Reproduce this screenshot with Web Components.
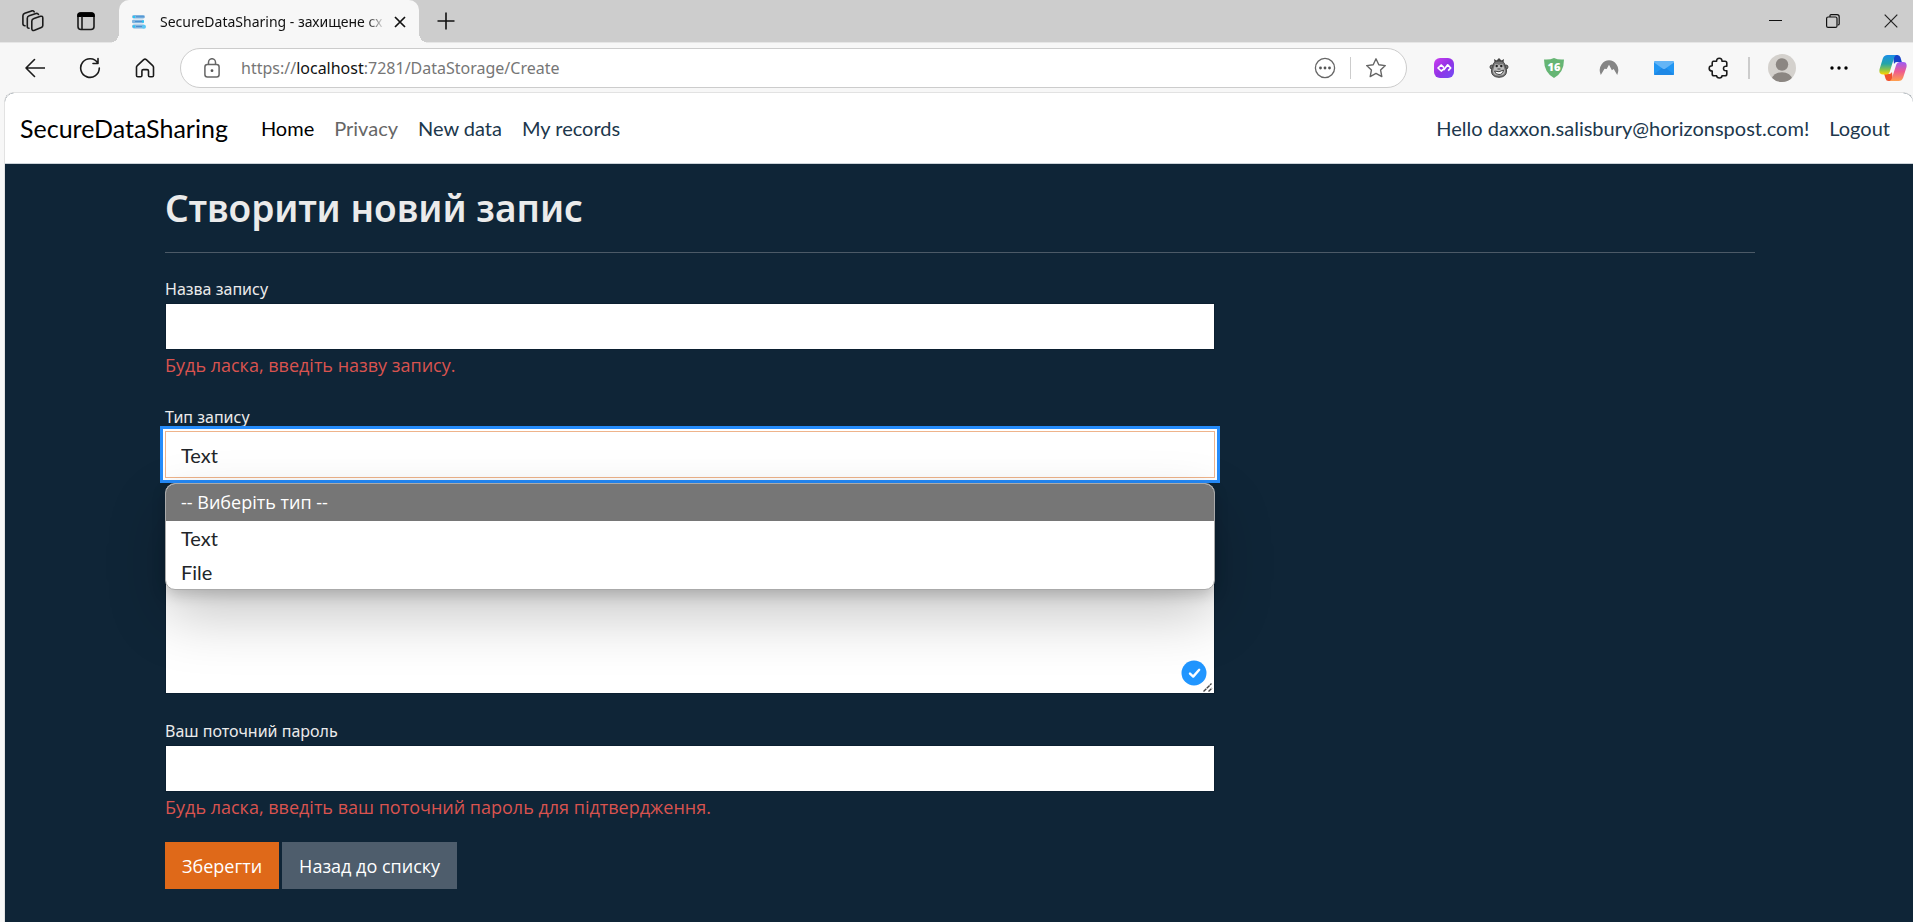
<!DOCTYPE html>
<html lang="uk">
<head>
<meta charset="utf-8">
<title>SecureDataSharing - захищене сховище</title>
<style>
html,body{margin:0;height:100%}
body{font-family:"Lato","Noto Sans",sans-serif;background:#f7f7f7;display:flex;flex-direction:column;min-height:100vh}
</style>
</head>
<body>
<browser-tabs></browser-tabs>
<browser-toolbar></browser-toolbar>
<site-page>
  <site-nav slot="nav"></site-nav>
  <record-form></record-form>
</site-page>
<script>
const define=(name,html,setup)=>customElements.define(name,class extends HTMLElement{
  connectedCallback(){
    if(this.shadowRoot)return;
    const t=document.createElement('template');
    t.innerHTML=typeof html==='function'?html(this):html;
    this.attachShadow({mode:'open'}).append(t.content.cloneNode(true));
    if(setup)setup(this.shadowRoot,this);
  }
});

/* name: [width, height, markup] */
const line='fill="none" stroke="#1b1b1b" stroke-width="1.6" stroke-linecap="round" stroke-linejoin="round"';
const icons={
 workspaces:[22,22,`<g ${line} stroke-width="1.4"><path d="M12 8.500 18.500 6.300Q20.800 5.800 20.800 8v7.500q0 1.500-1.500 2.100L12.500 20.300Q9.800 21 9.800 18.800V11Q9.800 9.200 12 8.500z"/><path d="M7 18.300Q5.200 18.300 5.300 16.300V8.200Q5.300 6.400 7.200 5.800L14 3.500Q15.800 3.100 16.500 4.500"/><path d="M3 15.800Q.8 15.500.9 13.500V5.800Q.9 4 2.800 3.300L9.600.9Q11.400.5 12.200 1.900"/></g>`],
 tabs:[20,20,`<rect x="2" y="2" width="16" height="16.500" rx="3" ${line}/><path d="M1.200 6V4.500Q1.200 1.200 4.500 1.200h11q3.300 0 3.300 3.300V6z" fill="#000"/><path d="M6 6v12" ${line} stroke-width="1.300"/>`],
 favicon:[16,16,`<g fill="#7fb4e0"><rect x="1" y="1" width="13" height="3.600" rx="1.800"/><rect x="1" y="5.700" width="12" height="3.600" rx="1.200"/><rect x="1" y="10.400" width="13" height="4" rx="1.800"/></g><g fill="#4a8fd0"><path d="M5 2.300h8v1H5zM4 7h8v1H4zM5 12h6v1H5z"/></g><circle cx="13" cy="12.800" r="2" fill="#5cc8f5"/><path d="M2 2h2v2H2zM2 11.500h2v2H2zM11 6.500h2v2h-2z" fill="#25c8f4"/>`],
 close:[14,14,`<path d="m2 2 10 10M12 2 2 12" stroke="#111" stroke-width="1.700"/>`],
 plus:[18,18,`<path d="M9 .5v17M.5 9h17" stroke="#111" stroke-width="1.600"/>`],
 min:[14,14,`<path d="M1 6.500h13" stroke="#111" stroke-width="1"/>`],
 restore:[14,14,`<path d="M4 3V1.500Q4 .7 5 .7h6q2.200 0 2.200 2.200v7.100q0 1-1.500 1" fill="none" stroke="#111" stroke-width="1.200"/><rect x=".6" y="3" width="10.400" height="10.400" rx="1.500" fill="none" stroke="#111" stroke-width="1.200"/>`],
 winclose:[14,14,`<path d="m.7.7 12.600 12.600M13.300.7.7 13.300" stroke="#222" stroke-width="1.200"/>`],
 back:[20,20,`<path d="M19.500 10H1M9.500 1.500 1 10l8.500 8.500" ${line}/>`],
 reload:[22,22,`<path d="M18.800 6A9.300 9.300 0 1 0 20.300 11M19 1.500v5h-5" ${line}/>`],
 home:[20,20,`<path d="M1.500 9.300Q1.500 8.300 2.300 7.600L8.700 1.700Q10 .6 11.300 1.700l6.400 5.900q.8.700.8 1.700v8.200q0 1.300-1.300 1.300h-2.400q-1.300 0-1.300-1.300V13q0-1.400-1.400-1.400H8.300Q6.900 11.600 6.900 13v4.500q0 1.300-1.300 1.300H2.800q-1.300 0-1.300-1.300z" ${line}/>`],
 lock:[16,20,`<g fill="none" stroke="#666" stroke-width="1.500"><rect x=".9" y="6.500" width="14.200" height="12.500" rx="2.500"/><path d="M4.500 6.500V4.200a3.500 3.500 0 0 1 7 0v2.300"/></g><circle cx="8" cy="12.700" r="1.400" fill="#555"/>`],
 info:[22,22,`<circle cx="11" cy="11" r="9.600" fill="none" stroke="#666" stroke-width="1.300"/><g fill="#555"><circle cx="6.500" cy="11" r="1.400"/><circle cx="11" cy="11" r="1.400"/><circle cx="15.500" cy="11" r="1.400"/></g>`],
 star:[22,22,`<path d="m11 1.800 2.800 5.900 6.500.9-4.700 4.500 1.200 6.500L11 16.400l-5.800 3.200 1.200-6.500L1.700 8.600l6.500-.9z" fill="none" stroke="#666" stroke-width="1.400" stroke-linejoin="round"/>`],
 purple:[20,20,`<defs><linearGradient id="p" x1="0" y1="0" x2="1" y2="1"><stop stop-color="#cc3df0"/><stop offset=".5" stop-color="#9333e6"/><stop offset="1" stop-color="#6f4df5"/></linearGradient></defs><rect width="20" height="20" rx="6" fill="url(#p)"/><path d="m10.200 10.800-3 2.200L4 10l3.200-3L10 9.700M9.700 12l4-5.200L16.700 10l-2.500 2.700" fill="none" stroke="#fff" stroke-width="1.700" stroke-linejoin="round"/>`],
 monkey:[20,20,`<path d="M5.500 4.500 5 1l2.500 1.500L10 0l2.500 2.500L15 1l-.5 3.500z" fill="#444"/><g fill="#777" stroke="#444"><circle cx="3" cy="9" r="2"/><circle cx="17" cy="9" r="2"/><path d="M4 8q0-5 6-5t6 5q1.500 2 1.500 5 0 6-7.500 6.300Q2.500 19 2.500 13 2.500 10 4 8z"/></g><path d="M5.500 8q0-2 2-2t2.500 1.500Q10.500 6 12.500 6t2 2l1.500 5q0 4.500-6 4.500T4 13z" fill="#bbb"/><circle cx="7.700" cy="8" r="1.200" fill="#222"/><circle cx="12.300" cy="8" r="1.200" fill="#222"/><path d="M8.500 11h3M5.500 13q4.500 2 9-1-.5 4.500-4.500 4.500T5.500 13z" fill="#fff" stroke="#444"/>`],
 shield:[20,20,`<path d="M10 0q4 2 10 1.500Q20 14.500 10 20 0 14.500 0 1.500 6 2 10 0z" fill="#66b574"/><text x="10" y="13" text-anchor="middle" font-family="Open Sans,sans-serif" font-weight="800" font-size="11" fill="#fff">16</text>`],
 arch:[20,20,`<path d="M1.800 17Q-.8 11 2.500 6.500 5.500 2.300 10 2.300t7.500 4.200Q20.800 11 18.200 17l-3.500-6-1.800 1.200L10 6.800 7.700 11 5.500 10.700z" fill="#858585"/>`],
 mail:[20,20,`<rect y="3" width="20" height="14" rx="1.500" fill="#2196f3"/><path d="m0 16.500 8-6.500h4l8 6.500q-.3.500-1.500.5h-17Q.3 17 0 16.500z" fill="#1e88e5"/><path d="M0 4.500Q0 3 1.500 3h17Q20 3 20 4.500l-8.500 6q-1.500 1-3 0z" fill="#64b5f6"/>`],
 puzzle:[22,22,`<path d="M5.200 4.200h3.400Q8.500 1.200 11.300 1.200T14 4.200h3q1.800 0 1.800 1.800v3.300q-3.300-.6-3.300 2.200t3.300 2.200v3.300q0 1.800-1.800 1.800H14q0 2.200-2.600 2.200T8.600 18.800H6q-1.800 0-1.800-1.800v-3Q1.200 14 1.200 11.400T4.200 8.800V6Q4.200 4.600 5.200 4.200z" ${line}/>`],
 avatar:[28,28,`<defs><clipPath id="a"><circle cx="14" cy="14" r="14"/></clipPath></defs><g clip-path="url(#a)"><rect width="28" height="28" fill="#d4d1cd"/><circle cx="14" cy="10.500" r="6.200" fill="#8b8682"/><ellipse cx="14" cy="25.500" rx="10" ry="7.300" fill="#8b8682"/></g>`],
 dots:[18,18,`<circle cx="2" cy="9" r="1.700"/><circle cx="9" cy="9" r="1.700"/><circle cx="16" cy="9" r="1.700"/>`],
 copilot:[28,28,`<defs><linearGradient id="c1" x1="0" y1="0" x2="0" y2="1"><stop stop-color="#1b8ee8"/><stop offset=".45" stop-color="#24a5a8"/><stop offset=".75" stop-color="#8bc34a"/><stop offset="1" stop-color="#ffd400"/></linearGradient><linearGradient id="c2" x1="0" y1="0" x2="0" y2="1"><stop stop-color="#9b5cf5"/><stop offset=".5" stop-color="#ee5a90"/><stop offset="1" stop-color="#ffa04d"/></linearGradient></defs><path d="M14 1h4.500q2.300 0 3 2.500L22.800 8h-5q-2 0-2.800 2z" fill="#1743c8"/><path d="M14 27H9.500q-2.300 0-3-2.500L5.200 20h5q2 0 2.800-2z" fill="#f0522f"/><path d="M8.500 1h9q-1.800.5-2.500 3l-4.300 14q-.9 2.500-3.200 2.500H4Q-.6 20.500.6 15L3.800 4.500Q5 1 8.500 1z" fill="url(#c1)"/><path d="M19.500 27h-9q1.800-.5 2.500-3l4.300-13.500Q18.200 8 20.500 8H24q4.600 0 3.400 5.500l-3.200 10Q23 27 19.500 27z" fill="url(#c2)"/>`],
 check:[26,26,`<circle cx="13" cy="13" r="12.500" fill="#2196ff"/><path d="m9 13.600 3.200 3 6-6.800" fill="none" stroke="#fff" stroke-width="2.400" stroke-linecap="round" stroke-linejoin="round"/>`],
 grip:[10,10,`<path d="m.5 9.500 8-8M5.500 9.500 9 6" stroke="#444" stroke-width="1.400" stroke-dasharray="4 .6"/>`]
};
define('ui-icon',el=>{const [w,h,m]=icons[el.getAttribute('name')];
 return `<style>:host{display:inline-flex}svg{display:block}</style><svg width="${w}" height="${h}" viewBox="0 0 ${w} ${h}" aria-hidden="true">${m}</svg>`});

define('icon-button',el=>`<style>
:host{display:flex;flex:none;width:var(--slot,55px);justify-content:center;align-items:center}
button{border:0;background:none;padding:0;display:flex}
</style><button type="button" aria-label="${el.getAttribute('label')}"><ui-icon name="${el.getAttribute('icon')}"></ui-icon></button>`);

define('browser-tabs',`<style>
:host{display:flex;align-items:stretch;height:42px;flex:none;background:#cdcdcd;color:#111}
.lead{display:flex;width:119px;box-sizing:border-box;padding-left:6px;--slot:53px}
.tab{position:relative;display:flex;align-items:center;width:300px;box-sizing:border-box;padding:0 6px 0 12px;gap:13px;background:#f7f7f7;border-radius:10px 10px 0 0;height:43px;--slot:27px}
.tab::before,.tab::after{content:"";position:absolute;bottom:0;width:10px;height:10px}
.tab::before{right:100%;background:radial-gradient(circle at 0 0,transparent 10px,#f7f7f7 10px)}
.tab::after{left:100%;background:radial-gradient(circle at 100% 0,transparent 10px,#f7f7f7 10px)}
.title{flex:1;white-space:nowrap;font:14px "Noto Sans",sans-serif;-webkit-mask-image:linear-gradient(90deg,#000 92%,transparent);mask-image:linear-gradient(90deg,#000 92%,transparent)}
.tab icon-button{margin-left:-12px}
.new{--slot:54px;display:flex}
.win{display:flex;margin-left:auto;--slot:58px;margin-right:-7px}
</style>
<div class="lead"><icon-button icon="workspaces" label="Workspaces"></icon-button><icon-button icon="tabs" label="Tab actions"></icon-button></div>
<div class="tab"><ui-icon name="favicon"></ui-icon><span class="title">SecureDataSharing - захищене сх</span><icon-button icon="close" label="Close tab"></icon-button></div>
<div class="new"><icon-button icon="plus" label="New tab"></icon-button></div>
<div class="win"><icon-button icon="min" label="Minimize"></icon-button><icon-button icon="restore" label="Restore"></icon-button><icon-button icon="winclose" label="Close"></icon-button></div>`);

define('browser-toolbar',`<style>
:host{display:flex;align-items:center;height:50px;flex:none;overflow:hidden;padding-left:7px;box-sizing:border-box;background:#f7f7f7;border-top:1px solid #e6e6e6}
.bar{flex:1;min-width:0;display:flex;align-items:center;height:40px;box-sizing:border-box;border:1px solid #ccc;border-radius:20px;background:#fff;margin:0 9px 0 8px;padding:0 5px 0 23px;--slot:50px}
.url{flex:1;margin-left:21px;font:16px "Noto Sans",sans-serif;color:#767676;white-space:nowrap}
.url b{font-weight:400;color:#111}
.sep{width:1px;height:22px;background:#ccc;flex:none}
.ext{display:flex;align-items:center;margin-right:-7px}
.ext .sep{width:2px;margin:0 2px}
.user{--slot:60px}
.more{--slot:54px}
</style>
<icon-button icon="back" label="Back"></icon-button><icon-button icon="reload" label="Refresh"></icon-button><icon-button icon="home" label="Home"></icon-button>
<div class="bar"><ui-icon name="lock"></ui-icon><span class="url">https://<b>localhost</b>:7281/DataStorage/Create</span><icon-button icon="info" label="Page info"></icon-button><span class="sep"></span><icon-button icon="star" label="Favorite"></icon-button></div>
<div class="ext"><icon-button icon="purple" label="Extension"></icon-button><icon-button icon="monkey" label="Extension"></icon-button><icon-button icon="shield" label="Ad blocker"></icon-button><icon-button icon="arch" label="VPN"></icon-button><icon-button icon="mail" label="Mail"></icon-button><icon-button icon="puzzle" label="Extensions"></icon-button><span class="sep"></span><icon-button class="user" icon="avatar" label="Profile"></icon-button><icon-button class="more" icon="dots" label="More"></icon-button><icon-button class="more" icon="copilot" label="Copilot"></icon-button></div>`);

define('site-page',`<style>
:host{display:flex;flex-direction:column;flex:1;margin-left:4px;border:1px solid #e2e2e2;border-width:1px 0 0 1px;border-radius:10px 10px 0 0;overflow:hidden;background:#0f2537}
</style><slot name="nav"></slot><slot></slot>`);

define('site-nav',`<style>
:host{display:block;background:#fff;border-bottom:1px solid #ccd3d9}
nav{display:flex;align-items:center;height:70px;padding:0 23px 0 15px;font-size:20px;gap:20px;white-space:nowrap}
a{color:#20374c;text-decoration:none}
.brand{font-size:25px;color:#000;margin-right:13px}
.on{color:#000}.dim{color:#666}
.user{margin-left:auto}
</style><nav><a class="brand" href="#">SecureDataSharing</a><a class="on" href="#">Home</a><a class="dim" href="#">Privacy</a><a href="#">New data</a><a href="#">My records</a><a class="user" href="#">Hello daxxon.salisbury@horizonspost.com!</a><a href="#">Logout</a></nav>`);

const labelCss='label{display:block;font:16px/27px "Noto Sans",sans-serif;color:#ebebeb}';

define('form-field',el=>`<style>
:host{display:block}
${labelCss}
input{display:block;width:100%;height:47px;box-sizing:border-box;border:1px solid #0b1f30;border-radius:0;background:#fff;padding:0 15px;font:20px "Lato",sans-serif}
.error{font:18px/30px "Open Sans",sans-serif;color:#d9534f}
</style><label for="f">${el.getAttribute('label')}</label><input id="f" type="${el.getAttribute('type')}"><div class="error">${el.getAttribute('error')}</div>`);

define('type-select',`<style>
:host{display:block;position:relative}
${labelCss}
select{display:block;appearance:none;width:100%;height:47px;box-sizing:border-box;border:1px solid #efb48b;border-radius:0;background:#fff;padding:0 15px;font:20px "Lato",sans-serif;color:#212529;outline:3px solid #258cfb;outline-offset:2px;box-shadow:0 0 0 2px #fff}
ul{position:absolute;z-index:1;top:100%;left:0;right:0;margin:5px 0 0;padding:0;list-style:none;box-sizing:border-box;border:1px solid #aaa;border-radius:10px;overflow:hidden;background:#fff;color:#212529;font-size:20px;box-shadow:0 26px 58px rgba(0,0,0,.22),0 5px 14px rgba(0,0,0,.18)}
li{line-height:34px;padding:0 15px}
li:first-child{background:#767676;color:#fff;font:18px/37px "Open Sans",sans-serif}
</style><label for="t">Тип запису</label>
<select id="t"><option>-- Виберіть тип --</option><option selected>Text</option><option>File</option></select>
<ul role="listbox"><li role="option">-- Виберіть тип --</li><li role="option">Text</li><li role="option">File</li></ul>`);

define('text-area',`<style>
:host{display:block;position:relative}
textarea{display:block;width:100%;height:164px;box-sizing:border-box;border:1px solid #0b1f30;border-radius:0;background:#fff;padding:10px 15px;font:20px "Lato",sans-serif;resize:none}
ui-icon{position:absolute;right:8px;bottom:8px}
.grip{right:2px;bottom:2px}
</style><textarea aria-label="Text"></textarea><ui-icon name="check"></ui-icon><ui-icon class="grip" name="grip"></ui-icon>`);

define('record-form',`<style>
:host{display:block;color:#ebebeb;padding:20px 23px 30px 25px}
main{max-width:1590px;margin:0 auto}
h1{margin:0;font-size:37px;line-height:48px;font-weight:600;font-family:"Noto Sans",sans-serif}
hr{height:1px;border:0;background:#4c5a67;margin:20px 0 23px}
form{display:grid;gap:24px;max-width:1050px}
text-area{margin-top:28px}
.actions{display:flex;gap:3px;margin-top:-4px}
button,a{font:18px/49px "Open Sans",sans-serif;height:47px;padding:0 17px;border:0;color:#fff;text-decoration:none;white-space:nowrap}
button{background:#df6919}a{background:#4e5d6c}
</style><main><h1>Створити новий запис</h1><hr>
<form onsubmit="return false">
<form-field label="Назва запису" type="text" error="Будь ласка, введіть назву запису."></form-field>
<type-select></type-select>
<text-area></text-area>
<form-field label="Ваш поточний пароль" type="password" error="Будь ласка, введіть ваш поточний пароль для підтвердження."></form-field>
<div class="actions"><button type="submit">Зберегти</button><a href="#">Назад до списку</a></div>
</form></main>`);
</script>
</body>
</html>
